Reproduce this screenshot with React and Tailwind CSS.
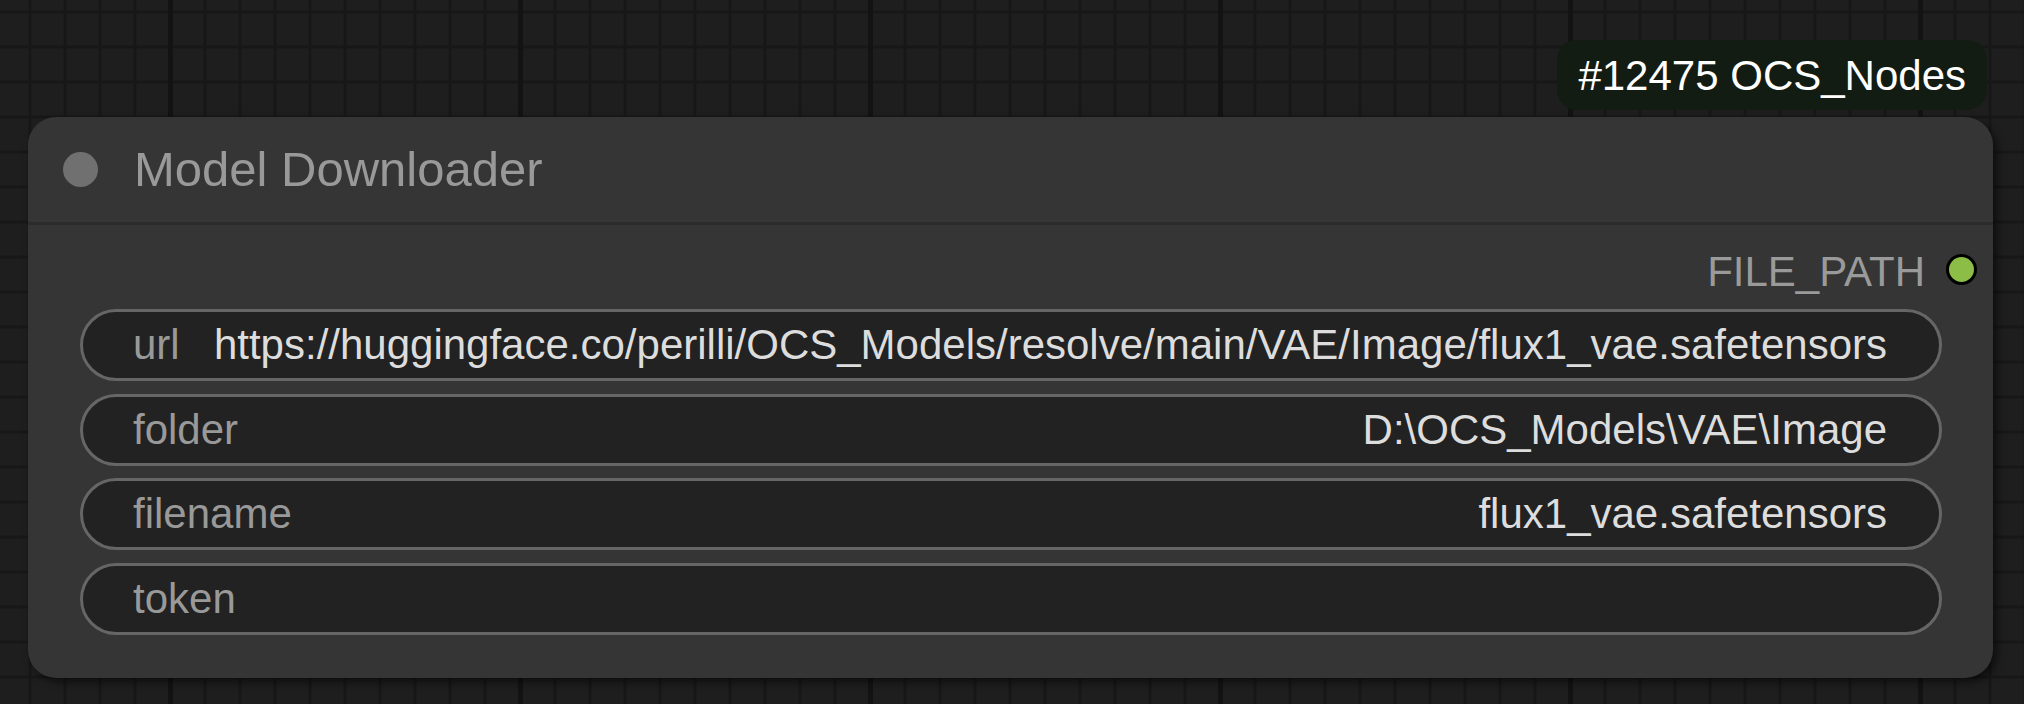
import React from "react";

const widgets = [
  {
    name: "url",
    value:
      "https://huggingface.co/perilli/OCS_Models/resolve/main/VAE/Image/flux1_vae.safetensors",
  },
  { name: "folder", value: "D:\\OCS_Models\\VAE\\Image" },
  { name: "filename", value: "flux1_vae.safetensors" },
  { name: "token", value: "" },
];

function Widget({ name, value }) {
  return (
    <div className="h-[72px] flex items-center justify-between rounded-full border-[3px] border-[#666666] bg-[#222222] pl-[50px] pr-[52px] text-[42px] leading-none">
      <span className="text-[#999999] whitespace-nowrap">{name}</span>
      <span className="text-[#dddddd] whitespace-nowrap">{value}</span>
    </div>
  );
}

function App() {
  return (
    <div className="w-[2024px] h-[704px] overflow-hidden bg-[#1e1e1e] [background-image:linear-gradient(to_right,#131313_5px,transparent_5px),linear-gradient(to_right,#171717_3px,transparent_3px),linear-gradient(to_bottom,#171717_3px,transparent_3px)] [background-size:350px_100%,35px_100%,100%_35px] [background-position:168px_0,28.5px_0,0_10.5px] pl-[28px] pt-[40px] font-['Liberation_Sans',Arial,sans-serif]">
      <div className="w-[1965px] flex flex-col">
        {/* node badge */}
        <div className="flex justify-end pr-[6px] mb-[7px]">
          <div className="h-[70px] flex items-center rounded-[20px] bg-[#131c12] px-[21px] pt-[2px] text-[42px] leading-none text-white whitespace-nowrap">
            #12475 OCS_Nodes
          </div>
        </div>

        {/* node */}
        <div className="h-[561px] rounded-[28px] bg-[#353535] shadow-[4px_4px_8px_rgba(0,0,0,0.55)] flex flex-col">
          <div className="h-[105px] flex items-center pl-[35px]">
            <div className="w-[35px] h-[35px] rounded-full bg-[#707070]" />
            <span className="ml-[36px] text-[49px] leading-none text-[#999999] whitespace-nowrap">
              Model Downloader
            </span>
          </div>
          <div className="h-[3px] bg-[#2b2b2b]" />

          <div className="h-[84px] flex items-center justify-end pt-[4px] pr-[16px]">
            <span className="mt-[5px] text-[42px] leading-none text-[#9a9a9a]">
              FILE_PATH
            </span>
            <div className="ml-[21px] w-[31px] h-[31px] rounded-full border-[3px] border-black bg-[#8bbd47]" />
          </div>

          <div className="flex flex-col gap-[12.5px] ml-[52px] mr-[51px]">
            {widgets.map((w) => (
              <Widget key={w.name} name={w.name} value={w.value} />
            ))}
          </div>
        </div>
      </div>
    </div>
  );
}

export default App;
